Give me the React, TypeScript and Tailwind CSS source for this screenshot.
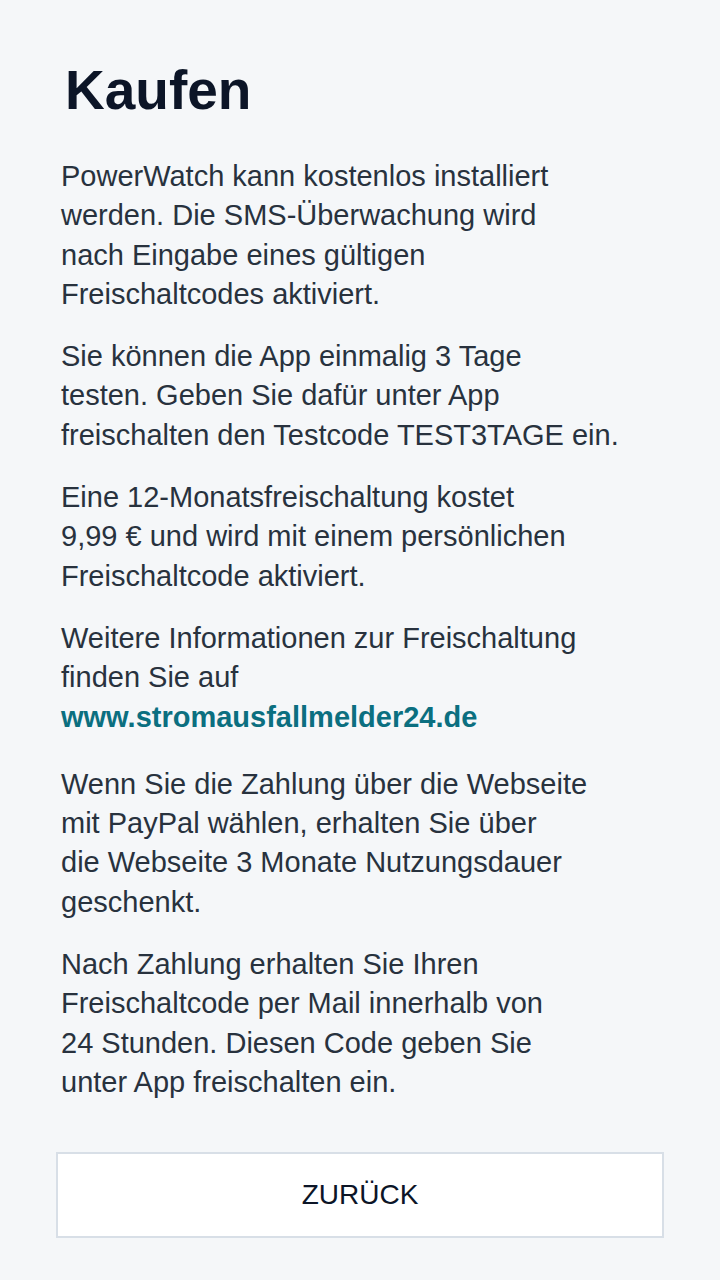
import React from "react";

export default function App() {
  return (
    <div
      className="min-h-[1280px] w-[720px] bg-[#f5f7f9] px-[56px] pt-[57px]"
      style={{ fontFamily: '"Liberation Sans", Arial, sans-serif' }}
    >
      <h1 className="pl-[9px] text-[55px] font-bold leading-[66px] text-[#0c1527]">Kaufen</h1>
      <div className="mt-[34px] pl-[5px] text-[29px] leading-[39.3px] text-[#28323e]">
        <p className="mb-[23px]">
          PowerWatch kann kostenlos installiert
          <br />
          werden. Die SMS-Überwachung wird
          <br />
          nach Eingabe eines gültigen
          <br />
          Freischaltcodes aktiviert.
        </p>
        <p className="mb-[23px]">
          Sie können die App einmalig 3 Tage
          <br />
          testen. Geben Sie dafür unter App
          <br />
          freischalten den Testcode TEST3TAGE ein.
        </p>
        <p className="mb-[23px]">
          Eine 12-Monatsfreischaltung kostet
          <br />
          9,99 € und wird mit einem persönlichen
          <br />
          Freischaltcode aktiviert.
        </p>
        <p className="mb-[28px]">
          Weitere Informationen zur Freischaltung
          <br />
          finden Sie auf
          <br />
          <a className="font-bold text-[#0b6f80]">www.stromausfallmelder24.de</a>
        </p>
        <p className="mb-[23px]">
          Wenn Sie die Zahlung über die Webseite
          <br />
          mit PayPal wählen, erhalten Sie über
          <br />
          die Webseite 3 Monate Nutzungsdauer
          <br />
          geschenkt.
        </p>
        <p>
          Nach Zahlung erhalten Sie Ihren
          <br />
          Freischaltcode per Mail innerhalb von
          <br />
          24 Stunden. Diesen Code geben Sie
          <br />
          unter App freischalten ein.
        </p>
      </div>
      <button className="mt-[50px] flex h-[86px] w-[608px] items-center justify-center border-2 border-[#d8dfe7] bg-white text-[28px] text-[#0c1527]">
        ZURÜCK
      </button>
    </div>
  );
}
